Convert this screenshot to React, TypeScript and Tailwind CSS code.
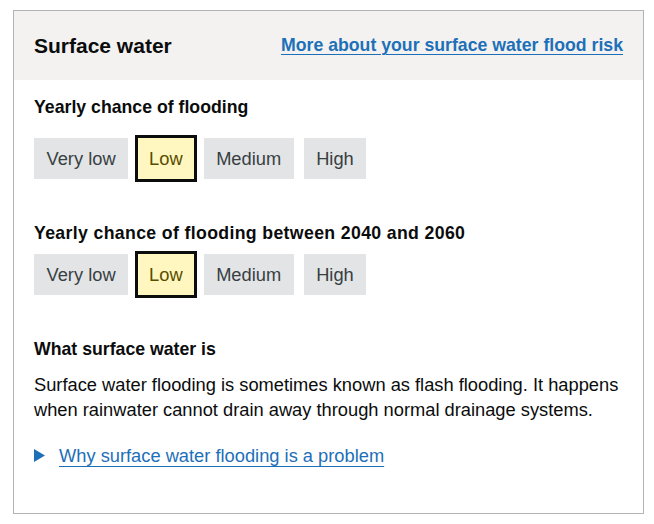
const LEVELS = ["Very low", "Low", "Medium", "High"];

function RiskScale({ selected }: { selected: string }) {
  return (
    <div className="flex gap-[10px]">
      {LEVELS.map((level) => {
        const active = level === selected;
        return (
          <div
            key={level}
            className={
              active
                ? "flex h-[41px] items-center bg-[#fff7bf] px-[11px] text-[18.3px] text-[#594d00] outline-[3px] outline-solid outline-[#0b0c0c]"
                : "flex h-[41px] items-center bg-[#e3e4e5] px-[12.5px] text-[18.3px] text-[#383f43]"
            }
          >
            {level}
          </div>
        );
      })}
    </div>
  );
}

export default function App() {
  return (
    <div className="min-h-[524px] bg-white pt-[10px] pl-[13px] font-['Liberation_Sans',Arial,sans-serif] text-[#0b0c0c]">
      <div className="h-[504px] w-[631px] border border-[#b1b4b6]">
        <div className="flex h-[69px] items-center justify-between bg-[#f3f2f1] px-[20px]">
          <h2 className="text-[21px] font-bold leading-[25px]">Surface water</h2>
          <a
            href="#"
            className="text-[17.7px] font-bold leading-[25px] text-[#1d70b8] underline decoration-1 underline-offset-[3px]"
          >
            More about your surface water flood risk
          </a>
        </div>

        <div className="px-[20px] pt-[15px]">
          <h3 className="text-[17.7px] font-bold leading-[25px]">Yearly chance of flooding</h3>
          <div className="mt-[18px]">
            <RiskScale selected="Low" />
          </div>

          <h3 className="mt-[42px] text-[17.7px] font-bold leading-[25px] tracking-[0.35px]">
            Yearly chance of flooding between 2040 and 2060
          </h3>
          <div className="mt-[8px]">
            <RiskScale selected="Low" />
          </div>

          <h3 className="mt-[42px] text-[17.7px] font-bold leading-[25px]">What surface water is</h3>
          <p className="mt-[10px] text-[18.3px] leading-[25px]">
            Surface water flooding is sometimes known as flash flooding. It happens when rainwater
            cannot drain away through normal drainage systems.
          </p>

          <div className="mt-[21px] flex items-center leading-[25px]">
            <svg width="11" height="13" viewBox="0 0 11 13" className="mr-[14px]">
              <path d="M0 0 L11 6.5 L0 13 Z" fill="#1d70b8" />
            </svg>
            <a
              href="#"
              className="text-[18.3px] text-[#1d70b8] underline decoration-1 underline-offset-[4px]"
            >
              Why surface water flooding is a problem
            </a>
          </div>
        </div>
      </div>
    </div>
  );
}
